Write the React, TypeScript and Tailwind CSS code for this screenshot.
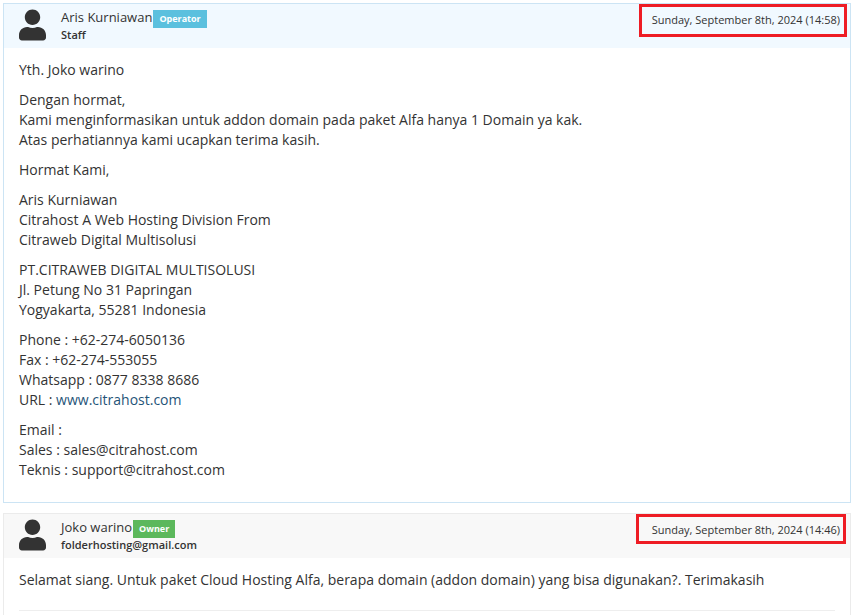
import { Fragment } from "react";
import { FaUser } from "react-icons/fa";
import clsx from "clsx";

interface Reply {
  id: number;
  name: string;
  detail: string;
  role: "Operator" | "Owner";
  date: string;
  dateTime: string;
  paragraphs: string[][];
}

const replies: Reply[] = [
  {
    id: 2,
    name: "Aris Kurniawan",
    detail: "Staff",
    role: "Operator",
    date: "Sunday, September 8th, 2024 (14:58)",
    dateTime: "2024-09-08T14:58",
    paragraphs: [
      ["Yth. Joko warino"],
      [
        "Dengan hormat,",
        "Kami menginformasikan untuk addon domain pada paket Alfa hanya 1 Domain ya kak.",
        "Atas perhatiannya kami ucapkan terima kasih.",
      ],
      ["Hormat Kami,"],
      ["Aris Kurniawan", "Citrahost A Web Hosting Division From", "Citraweb Digital Multisolusi"],
      ["PT.CITRAWEB DIGITAL MULTISOLUSI", "Jl. Petung No 31 Papringan", "Yogyakarta, 55281 Indonesia"],
      ["Phone : +62-274-6050136", "Fax : +62-274-553055", "Whatsapp : 0877 8338 8686", "URL : www.citrahost.com"],
      ["Email :", "Sales : sales@citrahost.com", "Teknis : support@citrahost.com"],
    ],
  },
  {
    id: 1,
    name: "Joko warino",
    detail: "folderhosting@gmail.com",
    role: "Owner",
    date: "Sunday, September 8th, 2024 (14:46)",
    dateTime: "2024-09-08T14:46",
    paragraphs: [
      ["Selamat siang. Untuk paket Cloud Hosting Alfa, berapa domain (addon domain) yang bisa digunakan?. Terimakasih"],
    ],
  },
];

// Turns a bare www address at the end of a line into a link
function Line({ text }: { text: string }) {
  const start = text.indexOf("www.");
  if (start < 0) return <>{text}</>;
  const host = text.slice(start);
  return (
    <>
      {text.slice(0, start)}
      <a href={`http://${host}`} className="text-[#1f5478] hover:underline">
        {host}
      </a>
    </>
  );
}

function TicketReply({ reply }: { reply: Reply }) {
  const staff = reply.role === "Operator";
  return (
    <article className={clsx("border", staff ? "border-[#cce4f4]" : "flex-1 border-b-0 border-[#ebebeb]")}>
      {/* Author */}
      <header
        className={clsx(
          "flex items-center gap-[15px] pt-1 pb-1.5 pl-[15px] pr-[10px]",
          staff ? "bg-[#f1f9ff]" : "bg-[#f8f8f8]"
        )}
      >
        <FaUser className="h-8 w-[27px] shrink-0" />
        <div className="flex-1">
          <div className="flex h-5 items-end gap-px">
            <span className="self-start text-[13px] leading-[18px]">{reply.name}</span>
            <span
              className={clsx(
                "px-1.5 text-[9px] leading-[18px] font-bold text-white",
                staff ? "bg-[#5bc0de]" : "bg-[#5cb85c]"
              )}
            >
              {reply.role}
            </span>
          </div>
          <p className="text-[11px] leading-[14px] font-semibold">{reply.detail}</p>
        </div>
        <time dateTime={reply.dateTime} className="relative mt-1 self-start text-[11px] leading-4">
          {reply.date}
          <span
            className={clsx(
              "pointer-events-none absolute border-3 border-[#ee1c24]",
              staff ? "-top-2 -right-[7px] -bottom-[9px] -left-[13px]" : "-top-2 -right-[6px] -bottom-[6px] -left-4"
            )}
          />
        </time>
      </header>

      {/* Message */}
      <div className={clsx("px-[15px] pt-3", staff && "pb-[22px]")}>
        <div className="space-y-[10px]">
          {reply.paragraphs.map((lines, i) => (
            <p key={i}>
              {lines.map((line, j) => (
                <Fragment key={j}>
                  {j > 0 && <br />}
                  <Line text={line} />
                </Fragment>
              ))}
            </p>
          ))}
        </div>
        {!staff && <hr className="mt-5 border-[#eeeeee]" />}
      </div>
    </article>
  );
}

export default function App() {
  return (
    <main className="flex min-h-screen flex-col gap-[10px] bg-white pt-[3px] pr-1 pl-[3px] font-['Open_Sans',sans-serif] text-sm leading-5 text-[#333333]">
      {replies.map((reply) => (
        <TicketReply key={reply.id} reply={reply} />
      ))}
    </main>
  );
}
